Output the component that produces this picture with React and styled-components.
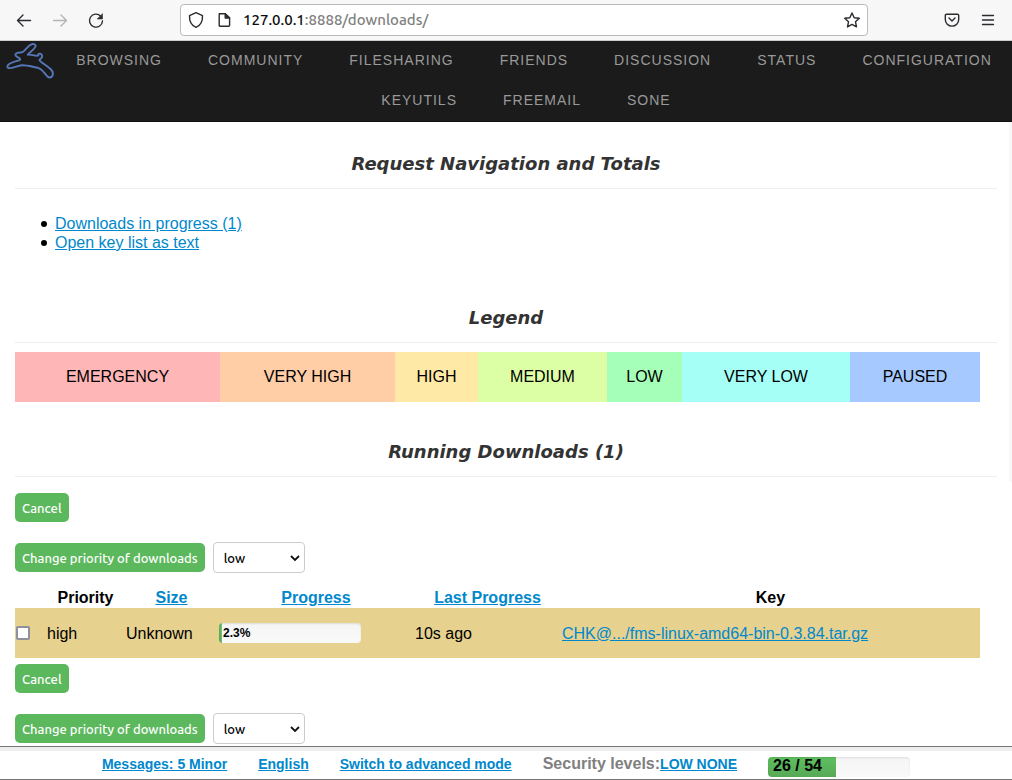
import React from 'react';
import styled, { createGlobalStyle } from 'styled-components';

const sans = '"Liberation Sans", Arial, sans-serif';
const ui = 'Ubuntu, "Noto Sans", sans-serif';
const blue = '#0088cc';

const GlobalStyle = createGlobalStyle`
  * { box-sizing: border-box; }
  body { margin: 0; background: #fff; color: #000; font: 16px/19px ${sans}; }
  a { color: ${blue}; }
`;

const Toolbar = styled.header`
  display: flex;
  align-items: center;
  gap: 75px;
  height: 41px;
  padding: 0 15px;
  background: #f7f7f7;
  border-bottom: 1px solid #ccc;
`;

const ToolGroup = styled.div`
  display: flex;
  gap: 18px;
`;

const IconButton = styled.button`
  display: flex;
  width: 18px;
  height: 18px;
  padding: 0;
  border: 0;
  background: none;
  color: ${(p) => (p.disabled ? '#b4b4b4' : '#2b2b30')};
`;

const AddressBar = styled.div`
  display: flex;
  align-items: center;
  gap: 10px;
  flex: 1;
  height: 32px;
  padding: 0 6px;
  border: 1px solid #bbb;
  border-radius: 4px;
  background: #fff;
`;

const Address = styled.div`
  flex: 1;
  font: 500 15px/20px ${ui};
  color: #808080;
  b { font-weight: 500; color: #0c0c0d; }
`;

const NavBar = styled.nav`
  display: flex;
  align-items: flex-start;
  background: #1b1b1b;
  border-bottom: 1px solid #111;
`;

const Logo = styled.a`
  display: flex;
  width: 54px;
`;

const NavList = styled.ul`
  display: flex;
  flex: 1;
  flex-wrap: wrap;
  justify-content: center;
  column-gap: 46px;
  margin: 0;
  padding: 0 14px 0 0;
  list-style: none;
  li:first-child { margin-left: 16px; }
`;

const NavLink = styled.a`
  display: block;
  padding-bottom: 2px;
  font-size: 14px;
  line-height: 38px;
  letter-spacing: 1px;
  text-transform: uppercase;
  text-decoration: none;
  && { color: #999; }
`;

const Overview = styled.div`
  padding: 0 12px 5px 15px;
  border-right: 3px solid #f8f8f8;
`;

const Title = styled.h2`
  margin: 0;
  padding: ${(p) => (p.$first ? 32 : 40)}px 0 14px;
  border-bottom: 1px solid #eee;
  font: italic bold 18px/20px "DejaVu Sans", sans-serif;
  color: #333;
  text-align: center;
`;

const Links = styled.ul`
  margin: 0;
  padding: 25px 0 16px 26px;
  list-style: none;
  li { display: flex; align-items: center; gap: 8px; }
  li::before {
    content: "";
    width: 6px;
    height: 6px;
    border-radius: 50%;
    background: #000;
  }
`;

const Legend = styled.ul`
  display: flex;
  margin: 9px 17px 0 0;
  padding: 0;
  list-style: none;
`;

const Level = styled.li`
  flex: ${(p) => p.$size} 1 0;
  background: ${(p) => p.$color};
  line-height: 50px;
  text-align: center;
`;

const Downloads = styled.form`
  padding: 11px 32px 34px 15px;
`;

const Actions = styled.div`
  display: flex;
  flex-direction: column;
  align-items: flex-start;
  gap: 20px;
  padding-bottom: 14px;
`;

const PriorityRow = styled.div`
  display: flex;
  align-items: center;
  gap: 8px;
`;

const Button = styled.button`
  height: 29px;
  padding: 0 7px;
  border: 0;
  border-radius: 5px;
  background: #5cb85c;
  color: #fff;
  font: 500 13px/20px ${ui};
`;

const SelectBox = styled.div`
  position: relative;
  width: 92px;
  svg { position: absolute; right: 5px; top: 11px; pointer-events: none; }
`;

const Select = styled.select`
  display: block;
  width: 100%;
  height: 31px;
  padding: 0 10px;
  appearance: none;
  border: 1px solid #ccc;
  border-radius: 4px;
  background: #fff;
  color: #000;
  font: 500 13px/20px ${ui};
`;

const Table = styled.table`
  width: 100%;
  table-layout: fixed;
  border-collapse: collapse;
  margin-bottom: 6px;
  th, td { padding: 0 1px; }
  th { height: 21px; }
  td { height: 50px; background: #e6d18e; }
`;

const Check = styled.input`
  display: block;
  width: 14px;
  height: 14px;
  margin: 0;
  appearance: none;
  border: 2px solid #8f8f9d;
  border-radius: 2px;
  background: #fff;
`;

const Meter = styled.div`
  align-self: flex-end;
  width: 142px;
  height: 20px;
  border-radius: 4px;
  overflow: hidden;
  color: #000;
  font-weight: bold;
  font-size: ${(p) => (p.$large ? 16 : 12)}px;
  line-height: ${(p) => (p.$large ? 17 : 20)}px;
  text-indent: ${(p) => (p.$large ? 5 : 4)}px;
  white-space: nowrap;
  box-shadow: inset 0 1px 2px rgba(0, 0, 0, 0.1);
  background: linear-gradient(#5fbf5f, #57a957) 0 0 / ${(p) => p.$value}% 100% no-repeat,
    linear-gradient(#f5f5f5, #f9f9f9);
`;

const StatusBar = styled.footer`
  position: fixed;
  left: 0;
  right: 0;
  bottom: 0;
  display: flex;
  align-items: center;
  justify-content: center;
  gap: 31px;
  height: 34px;
  border-top: 1px solid #777;
  border-bottom: 1px solid #777;
  background: linear-gradient(#eee 4px, #fff 4px);
  padding: 4px 0 2px;
  font-size: 14px;
  font-weight: bold;
`;

const Security = styled.div`
  display: flex;
  align-items: baseline;
  span { font-size: 16px; color: #808080; }
`;

const Glyph = ({ children }) => (
  <svg width="18" height="18" viewBox="0 0 18 18" fill="none" stroke="currentColor"
    strokeWidth="1.4" strokeLinecap="round" strokeLinejoin="round" aria-hidden="true">
    {children}
  </svg>
);

const nav = ['Browsing', 'Community', 'Filesharing', 'Friends', 'Discussion', 'Status',
  'Configuration', 'Keyutils', 'Freemail', 'Sone'];

const levels = [
  ['EMERGENCY', '#ffb6b6', 205],
  ['VERY HIGH', '#ffcda6', 175],
  ['HIGH', '#ffe9a6', 83],
  ['MEDIUM', '#dcffa6', 129],
  ['LOW', '#a6ffb8', 75],
  ['VERY LOW', '#a6fff6', 168],
  ['PAUSED', '#a6c9ff', 130],
];

const columns = [31, 79, 93, 196, 147, 419];
const total = columns.reduce((a, b) => a + b, 0);

const RequestActions = () => (
  <Actions>
    <Button type="button">Cancel</Button>
    <PriorityRow>
      <Button type="button">Change priority of downloads</Button>
      <SelectBox>
        <Select aria-label="Priority" defaultValue="low">
          {levels.slice(0, 6).map(([name]) => (
            <option key={name} value={name.toLowerCase()}>{name.toLowerCase()}</option>
          ))}
        </Select>
        <svg width="10" height="10" viewBox="0 0 10 10" fill="none" stroke="#111" strokeWidth="1.8" aria-hidden="true">
          <path d="M1 3l4 4 4-4" />
        </svg>
      </SelectBox>
    </PriorityRow>
  </Actions>
);

export default function App() {
  return (
    <>
      <GlobalStyle />
      <Toolbar>
        <ToolGroup>
          <IconButton aria-label="Back"><Glyph><path d="M15.500 9.500H3M8 4L2.500 9.500 8 15" /></Glyph></IconButton>
          <IconButton aria-label="Forward" disabled><Glyph><path d="M2.500 9.500H15M10 4l5.500 5.500L10 15" /></Glyph></IconButton>
          <IconButton aria-label="Reload">
            <Glyph>
              <path d="M13.600 5A6.500 6.500 0 1 0 15.500 10" />
              <path d="M15.500 3v5h-5z" fill="currentColor" strokeWidth="0.600" />
            </Glyph>
          </IconButton>
        </ToolGroup>
        <AddressBar>
          <IconButton aria-label="Site protection">
            <Glyph><path d="M9 1.700L15.500 4.700C15.700 10 14 14.200 9 16.300C4 14.200 2.300 10 2.500 4.700z" /></Glyph>
          </IconButton>
          <IconButton aria-label="Site information">
            <Glyph>
              <path d="M4.200 2.700h6l4.400 4.400v7.200a1 1 0 0 1-1 1H5.200a1 1 0 0 1-1-1V3.700a1 1 0 0 1 1-1" />
              <path d="M10.200 2.700v4.400h4.400z" fill="currentColor" />
            </Glyph>
          </IconButton>
          <Address><b>127.0.0.1</b>:8888/downloads/</Address>
          <IconButton aria-label="Bookmark">
            <Glyph><path d="M9 2l2.200 4.700 5.100.6-3.800 3.500 1 5.100L9 13.400l-4.500 2.500 1-5.100L1.700 7.300l5.100-.6z" /></Glyph>
          </IconButton>
        </AddressBar>
        <ToolGroup>
          <IconButton aria-label="Save to Pocket">
            <Glyph>
              <path d="M3.500 3.200h11a1.200 1.200 0 0 1 1.200 1.200v4a6.700 6.700 0 0 1-13.400 0v-4a1.200 1.200 0 0 1 1.200-1.200z" />
              <path d="M6 7l3 3 3-3" />
            </Glyph>
          </IconButton>
          <IconButton aria-label="Menu"><Glyph><path d="M3.500 4.500h11M3.500 9h11M3.500 13.500h11" /></Glyph></IconButton>
        </ToolGroup>
      </Toolbar>

      <NavBar>
        <Logo href="#" aria-label="Home">
          <svg width="54" height="40" viewBox="0 0 54 40" fill="none" stroke="#5577b8" strokeWidth="1.900" strokeLinejoin="round" aria-hidden="true">
            <path d="M7.500 25C8 23 14 20.500 19 19.300C21 18.500 20 17.500 18.500 16.700C16 15.700 14.700 14 16 12.700C17.500 11 20 11.700 22 11.300C25 10.500 27 5 32 3.200C34 2.500 36.200 3.800 35.500 5.500C34 9 30 10.500 27.800 13.700C31 13 34 15 37.500 14.700C39.500 14.500 37.500 13 39 12.700C41 12.200 42.500 14 42 16C41.500 18 39.500 17.500 39.500 19.200C41 21.500 47 24.500 51 28.500C53 30.500 53.500 33 52 35.500C50.500 37 48.500 36.500 47 35C44 31.500 42 28 38 26.800C33 26 27 24 22 24.300C17 24.700 12 27.700 8.500 27C7.500 26.700 7.300 26 7.500 25Z" />
          </svg>
        </Logo>
        <NavList>
          {nav.map((name) => <li key={name}><NavLink href="#">{name}</NavLink></li>)}
        </NavList>
      </NavBar>

      <main>
        <Overview>
          <Title $first>Request Navigation and Totals</Title>
          <Links>
            <li><a href="#running">Downloads in progress (1)</a></li>
            <li><a href="#keys">Open key list as text</a></li>
          </Links>
          <Title>Legend</Title>
          <Legend>
            {levels.map(([name, color, size]) => (
              <Level key={name} $color={color} $size={size}>{name}</Level>
            ))}
          </Legend>
          <Title id="running">Running Downloads (1)</Title>
        </Overview>

        <Downloads>
          <RequestActions />
          <Table>
            <colgroup>
              {columns.map((w, i) => <col key={i} style={{ width: `${(w / total) * 100}%` }} />)}
            </colgroup>
            <thead>
              <tr>
                <th />
                <th>Priority</th>
                <th><a href="#size">Size</a></th>
                <th><a href="#progress">Progress</a></th>
                <th><a href="#last">Last Progress</a></th>
                <th>Key</th>
              </tr>
            </thead>
            <tbody>
              <tr>
                <td><Check type="checkbox" aria-label="Select download" /></td>
                <td>high</td>
                <td>Unknown</td>
                <td><Meter $value={2}>2.3%</Meter></td>
                <td>10s ago</td>
                <td><a href="#key">CHK@.../fms-linux-amd64-bin-0.3.84.tar.gz</a></td>
              </tr>
            </tbody>
          </Table>
          <RequestActions />
        </Downloads>
      </main>

      <StatusBar>
        <a href="#messages">Messages: 5 Minor</a>
        <a href="#language">English</a>
        <a href="#mode">Switch to advanced mode</a>
        <Security><span>Security levels:</span><a href="#security">LOW NONE</a></Security>
        <Meter $large $value={48}>26 / 54</Meter>
      </StatusBar>
    </>
  );
}
